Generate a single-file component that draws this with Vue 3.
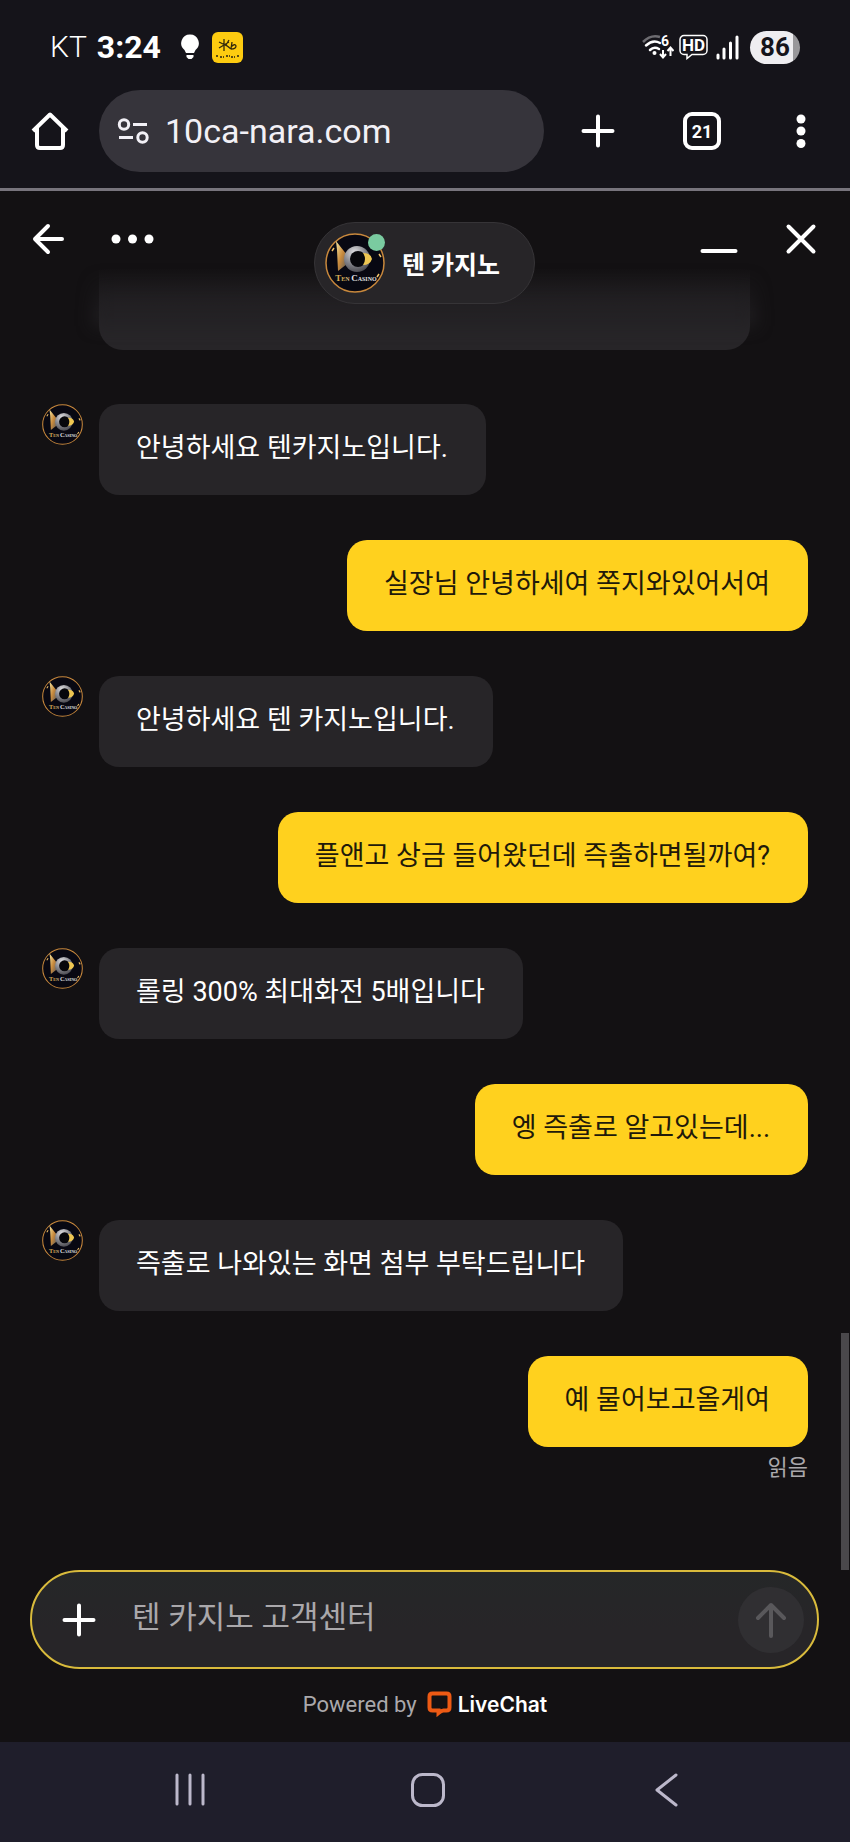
<script setup>
import { ref } from 'vue'

const messages = ref([
  { id: 1, from: 'agent', text: '안녕하세요 텐카지노입니다.' },
  { id: 2, from: 'me', text: '실장님 안녕하세여 쪽지와있어서여' },
  { id: 3, from: 'agent', text: '안녕하세요 텐 카지노입니다.' },
  { id: 4, from: 'me', text: '플앤고 상금 들어왔던데 즉출하면될까여?' },
  { id: 5, from: 'agent', text: '롤링 300% 최대화전 5배입니다' },
  { id: 6, from: 'me', text: '엥 즉출로 알고있는데...' },
  { id: 7, from: 'agent', text: '즉출로 나와있는 화면 첨부 부탁드립니다' },
  { id: 8, from: 'me', text: '예 물어보고올게여' },
])

const newMessage = ref('')

const sendMessage = () => {
  const text = newMessage.value.trim()
  if (!text) return
  messages.value.push({ id: messages.value.length + 1, from: 'me', text })
  newMessage.value = ''
}
</script>

<template>
  <div class="phone">
    <!-- logo shared by the header and the agent rows -->
    <svg class="defs" width="0" height="0" aria-hidden="true">
      <defs>
        <radialGradient id="ring" cx="40%" cy="25%" r="80%">
          <stop offset="0" stop-color="#e0e0e4" />
          <stop offset="0.5" stop-color="#8c8c92" />
          <stop offset="1" stop-color="#46464c" />
        </radialGradient>
        <linearGradient id="one" x1="0" y1="0" x2="1" y2="1">
          <stop offset="0" stop-color="#f5e6a0" />
          <stop offset="0.5" stop-color="#c98a3c" />
          <stop offset="1" stop-color="#55585c" />
        </linearGradient>
        <linearGradient id="word" x1="0" y1="0" x2="1" y2="0">
          <stop offset="0.25" stop-color="#d8ab55" />
          <stop offset="0.4" stop-color="#e6e6ee" />
        </linearGradient>
        <symbol id="logo" viewBox="0 0 60 60">
          <circle cx="30" cy="30" r="29" fill="#080812" stroke="#c8883c" stroke-width="1.5" />
          <path d="M12 17 L11 8 L22 22 V31 L13 38Z" fill="url(#one)" />
          <circle cx="32" cy="26" r="13" fill="url(#ring)" />
          <circle cx="33" cy="26" r="8" fill="#07070b" />
          <path d="M38 20 Q46 20 47 26 Q45 32 38 32 Q42 26 38 20Z" fill="#eec652" />
          <path d="M7 18 l2 -3 M54 21 l2 3 M52 44 l2 -3" stroke="#f3c46b" stroke-width="1.5" />
          <text x="31" y="48" text-anchor="middle" font-family="Liberation Serif, serif" font-size="6" font-weight="700" fill="url(#word)"><tspan font-size="9">T</tspan>EN <tspan font-size="9">C</tspan>ASINO</text>
        </symbol>
      </defs>
    </svg>

    <header class="status-bar">
      <span class="carrier">KT</span>
      <span class="clock">3:24</span>
      <svg class="bulb" width="18" height="26" viewBox="0 0 18 26">
        <path d="M9 0.5a8.7 8.7 0 0 0-5.5 15.500L5 19h8l1.500-3A8.700 8.700 0 0 0 9 .5ZM5.500 21h7v2l-2 2h-3l-2-2Z" fill="#fff" />
      </svg>
      <svg width="31" height="31" viewBox="0 0 31 31">
        <rect width="31" height="31" rx="6" fill="#fdcb10" />
        <path d="M7 10l10 5M7 16l10-6M12 7v12M17 8l-3 5 5 4M20 10l-1 7M19 15q4-4 5-1 0 3-5 3" fill="none" stroke="#33290c" stroke-width="1.300" />
        <path d="M4 24h3M8 25h4M14 24h4M19 25h4M25 24h2" stroke="#5b4a10" stroke-width="2" stroke-dasharray="2 1" />
      </svg>
      <div class="status-icons">
        <svg width="32" height="26" viewBox="0 0 32 26">
          <path d="M1 8Q9 0 18 3" fill="none" stroke="#6d6c71" stroke-width="2.500" />
          <path d="M4 11.500Q11 5 18 9M8 16q4-4 9-1" fill="none" stroke="#fff" stroke-width="2.500" stroke-linecap="round" />
          <circle cx="12.500" cy="19" r="2" fill="#fff" />
          <text x="19" y="12" font-family="Roboto, sans-serif" font-size="14" font-weight="700" fill="#fff">6</text>
          <path d="M21 16v7M18 20l3 3.500 3-3.500M28.500 22v-8M25.500 17l3-3.500 3 3.500" fill="none" stroke="#fff" stroke-width="2" />
        </svg>
        <svg width="29" height="26" viewBox="0 0 29 26">
          <path d="M5 1.500h19a4 4 0 0 1 4 4v11a4 4 0 0 1-4 4H13l-5 4v-4H5a4 4 0 0 1-4-4v-11a4 4 0 0 1 4-4Z" fill="none" stroke="#fff" stroke-width="1.500" />
          <text x="14.500" y="17" text-anchor="middle" font-family="Roboto, sans-serif" font-size="17" font-weight="700" fill="#fff">HD</text>
        </svg>
        <svg class="signal" width="24" height="26" viewBox="0 0 24 26">
          <path d="M3 21v3M9 15v9M15.500 9v15M22 3v21" stroke="#fff" stroke-width="3" stroke-linecap="round" />
        </svg>
        <span class="battery">86</span>
      </div>
    </header>

    <nav class="browser-bar" aria-label="Browser">
      <button class="icon-button" aria-label="Home">
        <svg width="38" height="38" viewBox="0 0 38 38">
          <path d="M2 19L19 2.500 36 19M6 15.500V33q0 3 3 3h20q3 0 3-3V15.500" fill="none" stroke="#fff" stroke-width="4" stroke-linejoin="round" />
        </svg>
      </button>
      <button class="address">
        <svg width="32" height="28" viewBox="0 0 32 28">
          <g fill="none" stroke="#f2f0f6" stroke-width="3">
            <circle cx="7" cy="7.500" r="4.700" />
            <circle cx="25.500" cy="20.500" r="4.700" />
            <path d="M16 7.500h14M2 20.500h14" />
          </g>
        </svg>
        <span>10ca-nara.com</span>
      </button>
      <div class="browser-actions">
        <button class="icon-button" aria-label="New tab">
          <svg width="34" height="34" viewBox="0 0 34 34">
            <path d="M17 2.500v29M2.500 17h29" stroke="#fff" stroke-width="4" stroke-linecap="round" />
          </svg>
        </button>
        <button class="tabs">21</button>
        <button class="icon-button" aria-label="Menu">
          <svg width="10" height="34" viewBox="0 0 10 34">
            <g fill="#fff">
              <circle cx="5" cy="5" r="4.500" />
              <circle cx="5" cy="17" r="4.500" />
              <circle cx="5" cy="29.500" r="4.500" />
            </g>
          </svg>
        </button>
      </div>
    </nav>

    <main class="chat">
      <header class="chat-header">
        <div class="header-left">
          <button class="icon-button" aria-label="Back">
            <svg width="32" height="34" viewBox="0 0 32 34">
              <path d="M16 4L3 17l13 13M3 17h27" fill="none" stroke="#fff" stroke-width="4" stroke-linecap="round" stroke-linejoin="round" />
            </svg>
          </button>
          <button class="icon-button" aria-label="More">
            <svg width="43" height="34" viewBox="0 0 43 34">
              <g fill="#fff">
                <circle cx="5" cy="17" r="4.500" />
                <circle cx="21.500" cy="17" r="4.500" />
                <circle cx="38" cy="17" r="4.500" />
              </g>
            </svg>
          </button>
        </div>
        <div class="agent-pill">
          <div class="agent-photo">
            <svg width="60" height="60"><use href="#logo" /></svg>
            <span class="online"></span>
          </div>
          <strong>텐 카지노</strong>
        </div>
        <div class="header-right">
          <button class="icon-button" aria-label="Minimize">
            <svg width="38" height="34" viewBox="0 0 38 34">
              <path d="M2.500 29h33" stroke="#fff" stroke-width="4" stroke-linecap="round" />
            </svg>
          </button>
          <button class="icon-button" aria-label="Close">
            <svg width="32" height="34" viewBox="0 0 32 34">
              <path d="M3.500 4.500l25 25M28.500 4.500l-25 25" stroke="#fff" stroke-width="4" stroke-linecap="round" />
            </svg>
          </button>
        </div>
      </header>

      <div class="scrolled-bubble"></div>

      <ul class="messages">
        <li
          v-for="message in messages"
          :key="message.id"
          class="message"
          :class="message.from"
        >
          <svg v-if="message.from === 'agent'" class="avatar" width="41" height="41">
            <use href="#logo" />
          </svg>
          <p class="bubble">{{ message.text }}</p>
        </li>
      </ul>
      <p class="read">읽음</p>

      <form class="composer" @submit.prevent="sendMessage">
        <button type="button" class="icon-button" aria-label="Attach">
          <svg width="34" height="34" viewBox="0 0 34 34">
            <path d="M17 2.500v29M2.500 17h29" stroke="#fff" stroke-width="4" stroke-linecap="round" />
          </svg>
        </button>
        <input
          v-model="newMessage"
          type="text"
          placeholder="텐 카지노 고객센터"
          aria-label="텐 카지노 고객센터"
        />
        <button type="submit" class="send" aria-label="Send">
          <svg width="32" height="36" viewBox="0 0 32 36">
            <path d="M16 34V3M3 16L16 3l13 13" fill="none" stroke="#59585b" stroke-width="4" stroke-linecap="round" stroke-linejoin="round" />
          </svg>
        </button>
      </form>

      <footer class="powered">
        <span>Powered by</span>
        <svg width="25" height="26" viewBox="0 0 25 26">
          <path d="M5.500 2.500h14q3 0 3 3v11q0 3-3 3h-3q-2 0-5 2.500v-2.500h-6q-3 0-3-3v-11q0-3 3-3Z" fill="none" stroke="#ed5a14" stroke-width="4" />
        </svg>
        <strong>LiveChat</strong>
      </footer>

      <div class="scrollbar"></div>
    </main>

    <nav class="system-nav" aria-label="System">
      <button class="icon-button" aria-label="Recents">
        <svg width="34" height="36" viewBox="0 0 34 36">
          <path d="M4 3v29M17 3v29M30 3v29" stroke="#bcb8cb" stroke-width="3" stroke-linecap="round" />
        </svg>
      </button>
      <button class="icon-button" aria-label="Home screen">
        <svg width="36" height="36" viewBox="0 0 36 36">
          <rect x="2.500" y="2.500" width="31" height="31" rx="10" fill="none" stroke="#bcb8cb" stroke-width="3" />
        </svg>
      </button>
      <button class="icon-button" aria-label="Go back">
        <svg width="24" height="36" viewBox="0 0 24 36">
          <path d="M22 3L3 18l19 15" fill="none" stroke="#bcb8cb" stroke-width="3" stroke-linecap="round" stroke-linejoin="round" />
        </svg>
      </button>
    </nav>
  </div>
</template>

<style>
body {
  margin: 0;
  background-color: #131113;
}
</style>

<style scoped>
.phone {
  display: flex;
  flex-direction: column;
  min-height: 100vh;
  background-color: #15141a;
  color: #fff;
  font-family: Roboto, "Noto Sans CJK KR", sans-serif;
}
.defs {
  position: absolute;
}
svg {
  display: block;
  flex: none;
}
button {
  padding: 0;
  border: none;
  background: none;
  color: inherit;
  font-family: inherit;
  cursor: pointer;
}
.icon-button {
  display: flex;
}
.status-bar {
  display: flex;
  align-items: center;
  height: 90px;
  padding: 4px 50px 0;
  box-sizing: border-box;
  font-size: 32px;
  line-height: 36px;
}
.carrier {
  font-size: 30px;
  font-weight: 300;
}
.clock {
  margin-left: 10px;
  font-weight: 700;
}
.bulb {
  margin: 0 13px 0 20px;
}
.status-icons {
  display: flex;
  align-items: center;
  gap: 5px;
  margin-left: auto;
}
.signal {
  margin: 0 6px 0 2px;
}
.battery {
  width: 50px;
  border-radius: 17px;
  background: linear-gradient(to right, #eeedf0 86%, #98979a 86%);
  color: #15141a;
  font-size: 26px;
  font-weight: 700;
  line-height: 33px;
  text-align: center;
}
.browser-bar {
  display: flex;
  align-items: center;
  padding: 0 44px 16px 31px;
  border-bottom: 3px solid #77747c;
}
.address {
  display: flex;
  flex: 1;
  align-items: center;
  gap: 16px;
  height: 82px;
  margin: 0 37px 0 30px;
  padding: 0 18px;
  border-radius: 41px;
  background-color: #36343b;
  color: #f2f0f6;
  font-size: 34px;
}
.browser-actions {
  display: flex;
  flex: none;
  align-items: center;
  gap: 68px;
}
.tabs {
  width: 38px;
  height: 38px;
  margin-right: 7px;
  border: 4px solid #fff;
  border-radius: 9px;
  font-size: 18px;
  font-weight: 700;
}
.chat {
  position: relative;
  display: flex;
  flex: 1;
  flex-direction: column;
  background-color: #131113;
}
.chat-header {
  z-index: 1;
  display: grid;
  grid-template-columns: 1fr auto 1fr;
  align-items: start;
  padding: 31px 33px 0 32px;
}
.header-left,
.header-right {
  display: flex;
  gap: 47px;
}
.header-right {
  justify-content: flex-end;
}
.agent-pill {
  display: flex;
  align-items: center;
  gap: 17px;
  height: 82px;
  padding: 0 34px 0 10px;
  border: 1px solid #363437;
  border-radius: 41px;
  box-sizing: border-box;
  background-color: #272528;
  font-size: 25px;
}
.agent-photo {
  position: relative;
}
.online {
  position: absolute;
  top: 1px;
  right: 0;
  width: 17px;
  height: 17px;
  border-radius: 50%;
  background-color: #7acba0;
}
/* tail of an older message that fades out under the header */
.scrolled-bubble {
  position: relative;
  height: 86px;
  margin: -40px 100px 0 99px;
  border-radius: 0 0 24px 24px;
  background: linear-gradient(to bottom, transparent 5%, #272528 65%);
}
.scrolled-bubble::before {
  content: "";
  position: absolute;
  inset: 12px -6px 24px;
  background: linear-gradient(to bottom, transparent, #222023);
  filter: blur(8px);
}
.messages {
  display: flex;
  flex-direction: column;
  gap: 45px;
  margin: 54px 0 0;
  padding: 0 42px;
  list-style: none;
}
.message {
  display: flex;
  align-items: flex-start;
  gap: 16px;
}
.message.me {
  justify-content: flex-end;
}
.bubble {
  margin: 0;
  padding: 28px 38px 30px 37px;
  border-radius: 20px;
  background-color: #272528;
  font-size: 27px;
  line-height: 33px;
}
.me .bubble {
  background-color: #ffd11e;
  color: #21190a;
}
.read {
  margin: 6px 42px 0;
  color: #aaa8ab;
  font-size: 22px;
  line-height: 30px;
  text-align: right;
}
.composer {
  display: flex;
  align-items: center;
  height: 99px;
  margin: auto 31px 0 30px;
  padding: 0 13px 0 30px;
  border: 2px solid #d9bb3c;
  border-radius: 50px;
  box-sizing: border-box;
  background: linear-gradient(to bottom, #252728, #272528 60%);
}
.composer input {
  flex: 1;
  min-width: 0;
  height: 60px;
  margin-left: 36px;
  padding: 0 0 4px;
  border: none;
  outline: none;
  box-sizing: border-box;
  background: none;
  color: #fff;
  font-family: inherit;
  font-size: 31px;
}
.composer input::placeholder {
  color: #aaa8ab;
}
.send {
  display: flex;
  flex: none;
  align-items: center;
  justify-content: center;
  width: 66px;
  height: 66px;
  border-radius: 50%;
  background-color: #302f32;
}
.powered {
  display: flex;
  align-items: center;
  justify-content: center;
  gap: 10px;
  height: 70px;
  padding-bottom: 3px;
  color: #aaa8ab;
  font-size: 22px;
}
.powered strong {
  color: #fff;
  font-family: Inter, sans-serif;
  font-size: 21px;
  font-weight: 600;
}
.powered svg {
  margin-right: -4px;
}
.scrollbar {
  position: absolute;
  right: 1px;
  bottom: 172px;
  width: 8px;
  height: 237px;
  background-color: #4a484b;
}
.system-nav {
  display: grid;
  grid-template-columns: repeat(3, 1fr);
  align-items: center;
  justify-items: center;
  height: 100px;
  padding: 0 65px 4px 71px;
  box-sizing: border-box;
  background-color: #1f1e2b;
}
</style>
